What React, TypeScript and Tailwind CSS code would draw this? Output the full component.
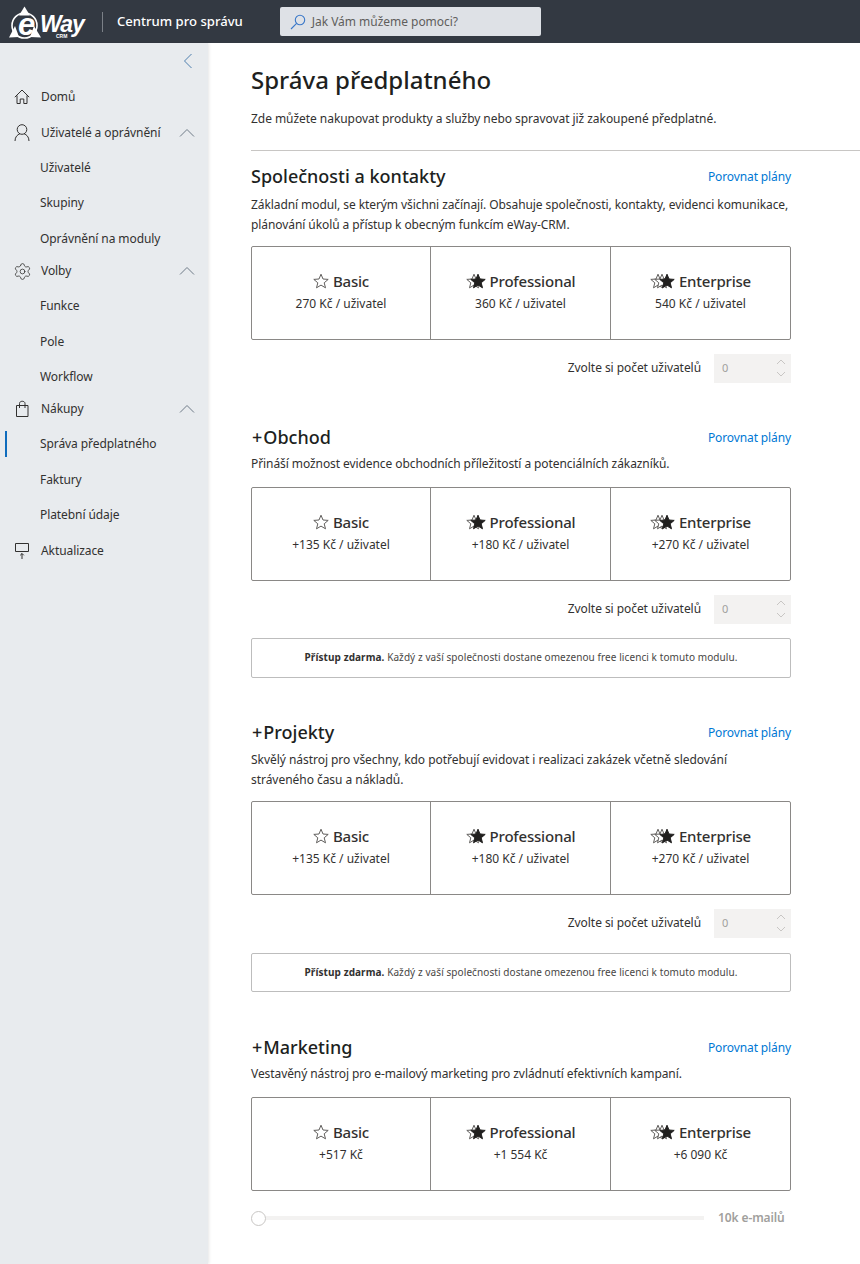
import { Settings } from "lucide-react";

const font = { fontFamily: '"Noto Sans", "Open Sans", sans-serif' };
const arial = { fontFamily: '"Liberation Sans", sans-serif' };

function Logo() {
  return (
    <div className="relative w-[78px] h-[36px] shrink-0">
      <svg viewBox="0 0 33 34" className="absolute left-0 top-0 w-[33px] h-[34px]" fill="none" stroke="white">
        <path d="M15.5 0.5 L21 9.5 L10 9.5 Z" fill="white" stroke="none" />
        <path d="M0 31.5 L6 20 L10 31 Z" fill="white" stroke="none" />
        <path d="M25 20 L32 31.5 L21 31 Z" fill="white" stroke="none" />
        <circle cx="15.5" cy="19.5" r="12.5" strokeWidth="1.6" />
      </svg>
      <span className="absolute left-[9px] top-[3px] text-[31px] leading-[32px] font-bold italic text-white" style={arial}>e</span>
      <span className="absolute left-[31px] top-[10px] text-[23px] leading-[17px] font-bold italic text-white tracking-[-1px]" style={arial}>Way</span>
      <span className="absolute left-[47px] top-[27px] text-[5px] leading-[6px] font-bold text-white" style={arial}>CRM</span>
    </div>
  );
}

function Header() {
  return (
    <header className="h-[43px] bg-[#333942] flex items-center shrink-0">
      <div className="pl-[9px] flex items-center pt-[5px]">
        <Logo />
      </div>
      <div className="ml-[15px] w-px h-[20px] bg-[#7b8087]" />
      <span className="ml-[14px] text-[13.1px] font-medium text-white">Centrum pro správu</span>
      <div className="ml-[37px] w-[261px] h-[29px] bg-[#dee1e6] rounded-[2px] flex items-center pl-[10px]">
        <svg viewBox="0 0 16 16" className="w-[16px] h-[16px]" fill="none" stroke="#3a78c9" strokeWidth="1.1">
          <circle cx="10" cy="6" r="4.7" />
          <path d="M6.6 9.4 L1 15" />
        </svg>
        <span className="ml-[6px] text-[12px] text-[#605e5c] tracking-[-0.03px]">Jak Vám můžeme pomoci?</span>
      </div>
    </header>
  );
}

function Chevron() {
  return (
    <svg viewBox="0 0 16 10" className="ml-auto w-[16px] h-[10px]" fill="none" stroke="#6f7b88" strokeWidth="1">
      <path d="M1 8.5 L8 1.5 L15 8.5" />
    </svg>
  );
}

function HomeIcon() {
  return (
    <svg viewBox="0 0 16 16" className="w-[16px] h-[16px]" fill="none" stroke="#323130" strokeWidth="1">
      <path d="M0.8 8.2 L8 1 L15.2 8.2" />
      <path d="M3 6.5 V14.5 H6.2 V10 H9.8 V14.5 H13 V6.5" />
    </svg>
  );
}

function UserIcon() {
  return (
    <svg viewBox="0 0 16 18" className="w-[16px] h-[18px]" fill="none" stroke="#323130" strokeWidth="1">
      <circle cx="8" cy="5.5" r="4.8" />
      <path d="M1 17 C1 12.8 3.5 10.6 5.8 9.9 M15 17 C15 12.8 12.5 10.6 10.2 9.9" />
    </svg>
  );
}

function BagIcon() {
  return (
    <svg viewBox="0 0 16 18" className="w-[16px] h-[18px]" fill="none" stroke="#323130" strokeWidth="1">
      <path d="M2.5 5.5 H14 V16.5 H2.5 Z" />
      <path d="M5.5 8 V3.5 C5.5 0.5 11 0.5 11 3.5 V8" />
    </svg>
  );
}

function UpdateIcon() {
  return (
    <svg viewBox="0 0 16 18" className="w-[16px] h-[18px]" fill="none" stroke="#323130" strokeWidth="1">
      <path d="M1.5 1.5 H14.5 V9.5 H1.5 Z" />
      <path d="M8 17 V11.5 M6.2 13.3 L8 11.5 L9.8 13.3" />
    </svg>
  );
}

function NavGroup({ icon, label, className }: { icon: React.ReactNode; label: string; className: string }) {
  return (
    <div className={`flex items-center pl-[14px] pr-[13px] ${className}`}>
      <span className="w-[16px] flex justify-center">{icon}</span>
      <span className="ml-[11px] text-[12px] text-[#323130] tracking-[-0.08px]">{label}</span>
      <Chevron />
    </div>
  );
}

function NavItem({ label, active }: { label: string; active?: boolean }) {
  return (
    <div className="h-[35.5px] flex items-center pl-[40px] relative">
      {active ? <span className="absolute left-[5px] top-[4px] w-[2px] h-[26px] bg-[#0f6cbd]" /> : null}
      <span className="text-[12px] text-[#323130] tracking-[-0.08px]">{label}</span>
    </div>
  );
}

function Sidebar() {
  return (
    <aside className="w-[208px] shrink-0 bg-[#e8ebee] shadow-[1px_0_3px_rgba(0,0,0,0.1)] pt-[7px]">
      <div className="h-[22px] flex justify-end pr-[15px]">
        <svg viewBox="0 0 10 16" className="w-[10px] h-[16px] mt-[3px]" fill="none" stroke="#4e7fae" strokeWidth="1">
          <path d="M8.5 1 L1.5 8 L8.5 15" />
        </svg>
      </div>
      <div className="mt-[7px]">
        <div className="h-[36px] flex items-center pl-[14px]">
          <HomeIcon />
          <span className="ml-[11px] text-[12px] text-[#323130] tracking-[-0.08px]">Domů</span>
        </div>
        <NavGroup className="h-[35px]" icon={<UserIcon />} label="Uživatelé a oprávnění" />
        <NavItem label="Uživatelé" />
        <NavItem label="Skupiny" />
        <NavItem label="Oprávnění na moduly" />
        <NavGroup className="h-[32px] pb-[3px]" icon={<Settings className="w-[19px] h-[19px] shrink-0 text-[#323130]" strokeWidth={1} />} label="Volby" />
        <NavItem label="Funkce" />
        <NavItem label="Pole" />
        <NavItem label="Workflow" />
        <NavGroup className="h-[31.5px] pb-[3px]" icon={<BagIcon />} label="Nákupy" />
        <NavItem label="Správa předplatného" active />
        <NavItem label="Faktury" />
        <NavItem label="Platební údaje" />
        <div className="h-[36px] flex items-center pl-[14px]">
          <UpdateIcon />
          <span className="ml-[11px] text-[12px] text-[#323130] tracking-[-0.08px]">Aktualizace</span>
        </div>
      </div>
    </aside>
  );
}

function Star({ filled, className }: { filled?: boolean; className?: string }) {
  return (
    <svg viewBox="0 0 16 16" className={className}>
      <path
        d="M8 1.2 L10 6 L15.2 6.4 L11.2 9.8 L12.5 14.8 L8 12.1 L3.5 14.8 L4.8 9.8 L0.8 6.4 L6 6 Z"
        fill={filled ? "#201f1e" : "white"}
        stroke={filled ? "#201f1e" : "#605e5c"}
        strokeWidth="1"
        strokeLinejoin="round"
      />
    </svg>
  );
}

function PlanIcon({ level }: { level: number }) {
  if (level === 0) return <Star className="w-[16px] h-[16px]" />;
  if (level === 1)
    return (
      <span className="relative w-[20px] h-[16px] inline-block">
        <Star className="absolute left-0 top-0 w-[16px] h-[16px]" />
        <Star filled className="absolute left-[4px] top-0 w-[16px] h-[16px]" />
      </span>
    );
  return (
    <span className="relative w-[25px] h-[16px] inline-block">
      <Star className="absolute left-0 top-0 w-[16px] h-[16px]" />
      <Star className="absolute left-[4px] top-0 w-[16px] h-[16px]" />
      <Star filled className="absolute left-[9px] top-0 w-[16px] h-[16px]" />
    </span>
  );
}

function Plan({ level, name, price, className }: { level: number; name: string; price: string; className: string }) {
  return (
    <div className={`flex flex-col items-center pt-[23px] ${className}`}>
      <div className="flex items-center gap-[4px] h-[22px]">
        <PlanIcon level={level} />
        <span className="text-[15px] font-medium text-[#323130] tracking-[-0.2px]">{name}</span>
      </div>
      <span className="mt-[2px] text-[12px] leading-[20px] text-[#323130]">{price}</span>
    </div>
  );
}

function Plans({ prices, className }: { prices: string[]; className: string }) {
  return (
    <div className={`h-[93.5px] flex border border-[#8a8886] rounded-[2px] ${className}`}>
      <Plan level={0} name="Basic" price={prices[0]} className="w-[178px]" />
      <Plan level={1} name="Professional" price={prices[1]} className="w-[180px] border-l border-[#8a8886]" />
      <Plan level={2} name="Enterprise" price={prices[2]} className="flex-1 border-l border-[#8a8886]" />
    </div>
  );
}

function Stepper() {
  return (
    <div className="mt-[14.5px] flex items-center justify-end">
      <span className="text-[12px] text-[#323130] tracking-[-0.06px]">Zvolte si počet uživatelů</span>
      <div className="ml-[13px] w-[77px] h-[28.5px] bg-[#f3f2f1] flex items-center justify-between pl-[8px] pr-[5px]">
        <span className="text-[11px] text-[#a19f9d]">0</span>
        <span className="flex flex-col gap-[6px]">
          <svg viewBox="0 0 10 6" className="w-[10px] h-[6px]" fill="none" stroke="#c8c6c4"><path d="M1 5 L5 1 L9 5" /></svg>
          <svg viewBox="0 0 10 6" className="w-[10px] h-[6px]" fill="none" stroke="#c8c6c4"><path d="M1 1 L5 5 L9 1" /></svg>
        </span>
      </div>
    </div>
  );
}

function Notice({ className }: { className: string }) {
  return (
    <div className={`border border-[#bdbdbd] rounded-[2px] flex items-center justify-center text-[10px] text-[#484644] tracking-[0.08px] ${className}`}>
      <span>
        <b className="font-bold text-[#323130]">Přístup zdarma.</b> Každý z vaší společnosti dostane omezenou free licenci k tomuto modulu.
      </span>
    </div>
  );
}

function SectionHead({ title, plus, descClass, children }: { title: string; plus?: boolean; descClass: string; children: React.ReactNode }) {
  return (
    <>
      <div className="flex items-center justify-between h-[26px]">
        <h2 className="text-[18px] font-medium text-[#201f1e]">
          {plus ? <span className="ml-[1px] mr-[1px]">+</span> : null}
          {title}
        </h2>
        <a className="pt-[2px] text-[12px] text-[#0078d4] tracking-[-0.12px]">Porovnat plány</a>
      </div>
      <p className={`text-[12px] leading-[20px] text-[#323130] ${descClass}`}>{children}</p>
    </>
  );
}

export default function App() {
  return (
    <div className="w-[860px] h-[1264px] overflow-hidden flex flex-col bg-white" style={font}>
      <Header />
      <div className="flex flex-1 min-h-0">
        <Sidebar />
        <main className="flex-1 pl-[43px]">
          <h1 className="mt-[19px] text-[24px] leading-[36px] font-medium text-[#201f1e]">Správa předplatného</h1>
          <p className="mt-[11px] text-[12px] leading-[20px] text-[#323130] tracking-[-0.05px]">Zde můžete nakupovat produkty a služby nebo spravovat již zakoupené předplatné.</p>
          <div className="mt-[21px] h-px bg-[#c8c6c4]" />
          <div className="w-[540px]">
            <section className="mt-[12px]">
              <SectionHead title="Společnosti a kontakty" descClass="mt-[6px] tracking-[-0.08px]">
                Základní modul, se kterým všichni začínají. Obsahuje společnosti, kontakty, evidenci komunikace, plánování úkolů a přístup k obecným funkcím eWay-CRM.
              </SectionHead>
              <Plans className="mt-[11px]" prices={["270 Kč / uživatel", "360 Kč / uživatel", "540 Kč / uživatel"]} />
              <Stepper />
            </section>
            <section className="mt-[41.5px]">
              <SectionHead plus title="Obchod" descClass="mt-[4px] tracking-[-0.08px]">Přináší možnost evidence obchodních příležitostí a potenciálních zákazníků.</SectionHead>
              <Plans className="mt-[13px]" prices={["+135 Kč / uživatel", "+180 Kč / uživatel", "+270 Kč / uživatel"]} />
              <Stepper />
              <Notice className="mt-[14.5px] h-[39.5px]" />
            </section>
            <section className="mt-[41.5px]">
              <SectionHead plus title="Projekty" descClass="mt-[5px] tracking-[-0.04px]">Skvělý nástroj pro všechny, kdo potřebují evidovat i realizaci zakázek včetně sledování stráveného času a nákladů.</SectionHead>
              <Plans className="mt-[11px]" prices={["+135 Kč / uživatel", "+180 Kč / uživatel", "+270 Kč / uživatel"]} />
              <Stepper />
              <Notice className="mt-[15px] h-[39px]" />
            </section>
            <section className="mt-[42.5px]">
              <SectionHead plus title="Marketing" descClass="mt-[4px] tracking-[-0.08px]">Vestavěný nástroj pro e-mailový marketing pro zvládnutí efektivních kampaní.</SectionHead>
              <Plans className="mt-[13px]" prices={["+517 Kč", "+1 554 Kč", "+6 090 Kč"]} />
              <div className="mt-[18.5px] flex items-center">
                <span className="w-[15px] h-[15px] rounded-full border border-[#c8c6c4] bg-white shrink-0" />
                <span className="w-[438px] h-[4px] bg-[#f3f2f1]" />
                <span className="ml-[14px] text-[12px] font-semibold text-[#a19f9d] tracking-[-0.1px]">10k e-mailů</span>
              </div>
            </section>
          </div>
        </main>
      </div>
    </div>
  );
}
